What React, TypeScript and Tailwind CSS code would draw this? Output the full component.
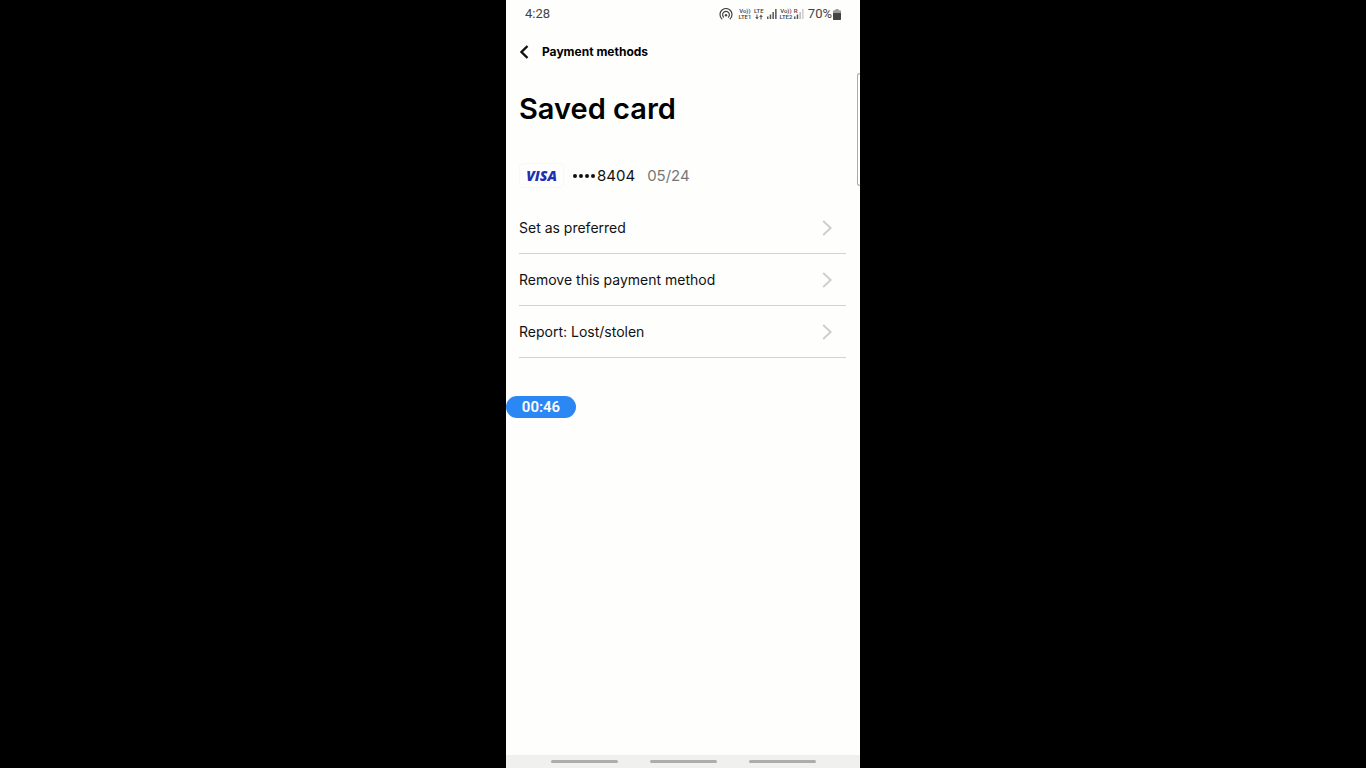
import React from "react";

const actions = ["Set as preferred", "Remove this payment method", "Report: Lost/stolen"];

function HotspotIcon() {
  return (
    <svg className="h-3 w-[14px]" viewBox="0 0 14 12" fill="none" stroke="#444" strokeWidth="1.2" strokeLinecap="round" aria-hidden="true">
      <path d="M2.800 10.800A6 6 0 1 1 11.200 10.800" />
      <path d="M4.600 9.200A3.400 3.400 0 1 1 9.400 9.200" />
      <circle cx="7" cy="7.200" r="1.200" fill="#444" stroke="none" />
    </svg>
  );
}

function SignalIcon({ weak = false }: { weak?: boolean }) {
  return (
    <svg className="h-[10px] w-[10px]" viewBox="0 0 10 10" fill="#555" aria-hidden="true">
      <rect x="0" y="7.5" width="1.5" height="2.5" />
      <rect x="2.7" y="5.5" width="1.5" height="4.5" />
      <rect x="5.4" y="3" width="1.5" height="7" fill={weak ? "#bbb" : "#555"} />
      <rect x="8.1" y="0" width="1.5" height="10" fill={weak ? "#ccc" : "#555"} />
    </svg>
  );
}

function StatusBar() {
  return (
    <div className="flex h-7 items-center justify-between px-[19px] font-[Roboto,sans-serif] text-[13px] text-[#444]">
      <span>4:28</span>
      <div className="flex items-center">
        <HotspotIcon />
        <div className="ml-[5px] w-[14px] text-center text-[6px] font-medium leading-[6px]">
          <div>Vo))</div>
          <div>LTE1</div>
        </div>
        <div className="ml-px flex w-3 flex-col items-center text-[6px] font-medium leading-[6px]">
          <div>LTE</div>
          <svg className="h-[6px] w-2" viewBox="0 0 8 6" fill="#555" aria-hidden="true">
            <path d="M1.5 0.5h1v2.5h1.3L2 5.5 0.2 3h1.3zM5.5 5.5h1V3h1.3L6 0.5 4.2 3h1.3z" />
          </svg>
        </div>
        <div className="ml-[2px]">
          <SignalIcon />
        </div>
        <div className="ml-[2px] w-[14px] text-center text-[6px] font-medium leading-[6px]">
          <div>Vo))</div>
          <div>LTE2</div>
        </div>
        <div className="relative ml-px">
          <SignalIcon weak />
          <span className="absolute left-0 -top-px text-[6px] font-medium leading-[6px]">R</span>
        </div>
        <span className="ml-1">70%</span>
        <svg className="ml-px h-[11px] w-2" viewBox="0 0 8 11" aria-hidden="true">
          <path d="M2.5 0h3v1.2H7a1 1 0 0 1 1 1V10a1 1 0 0 1-1 1H1a1 1 0 0 1-1-1V2.200a1 1 0 0 1 1-1h1.500z" fill="#999" />
          <path d="M0 4h8v6a1 1 0 0 1-1 1H1a1 1 0 0 1-1-1z" fill="#444" />
        </svg>
      </div>
    </div>
  );
}

function VisaLogo() {
  return (
    <div className="flex h-[25px] w-[45px] items-center justify-center rounded-sm border border-[#f8f8fa] bg-[#fefefe]">
      <span className="font-['Open_Sans',sans-serif] text-sm font-extrabold italic leading-none text-[#1f30b0]">VISA</span>
    </div>
  );
}

export default function App() {
  return (
    <div className="min-h-screen bg-black">
      <div className="relative mx-auto flex min-h-screen w-full max-w-[354px] flex-col overflow-hidden bg-[#fefefd] font-[Inter,sans-serif] text-[#111]">
        <StatusBar />

        <header className="flex h-12 items-center gap-[13px] pl-[13px]">
          <button type="button" aria-label="Back">
            <svg className="h-[14px] w-[10px]" viewBox="0 0 10 14" fill="none" stroke="#111" strokeWidth="2.4" aria-hidden="true">
              <path d="M8.500 1 2.500 7l6 6" />
            </svg>
          </button>
          <span className="text-xs font-bold text-black">Payment methods</span>
        </header>

        <main className="flex grow flex-col pl-[13px] pr-[14px]">
          <h1 className="mt-[15px] text-[29px] font-semibold leading-9 text-black">Saved card</h1>

          <div className="mt-9 flex items-center text-[15px] leading-[25px]">
            <VisaLogo />
            <span className="ml-[9px] flex gap-[2px]" aria-hidden="true">
              {[0, 1, 2, 3].map((dot) => (
                <span key={dot} className="h-1 w-1 rounded-full bg-[#111]" />
              ))}
            </span>
            <span className="ml-[2px]">8404</span>
            <span className="ml-3 text-[#777]">05/24</span>
          </div>

          <ul className="mt-[14px]">
            {actions.map((label) => (
              <li key={label} className="border-b border-[#d2d2d4]">
                <button type="button" className="flex h-[51px] w-full items-center justify-between pr-[14px] text-left text-sm">
                  <span className="pt-px">{label}</span>
                  <svg className="h-4 w-[10px]" viewBox="0 0 10 16" fill="none" stroke="#ccc" strokeWidth="1.8" aria-hidden="true">
                    <path d="M1.200 1 8.700 8 1.200 15" />
                  </svg>
                </button>
              </li>
            ))}
          </ul>
        </main>

        <nav className="flex h-[13px] items-center justify-center gap-8 bg-[#f0f0ee]">
          {["Recents", "Home", "Go back"].map((label) => (
            <button key={label} type="button" aria-label={label} className="h-[3px] w-[67px] rounded-full bg-[#adadab]" />
          ))}
        </nav>

        {/* edge panel handle */}
        <div className="absolute right-0 top-[73px] h-[113px] w-[3px] rounded-l border-y border-l border-[#aaa]" />

        {/* screen recorder timer */}
        <div className="absolute left-0 top-[396px] flex h-[22px] w-[70px] items-center justify-center rounded-full bg-[#2b87f3] font-[Roboto,sans-serif] text-[15px] font-semibold text-white">
          00:46
        </div>
      </div>
    </div>
  );
}
